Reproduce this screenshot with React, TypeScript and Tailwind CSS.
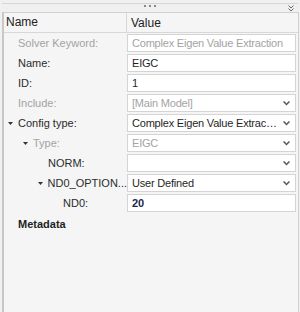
import React from "react";

type Row = {
  label: string;
  value?: string;
  indent: number;
  disabled?: boolean;
  caret?: boolean;
  dropdown?: boolean;
  strong?: boolean;
};

const rows: Row[] = [
  { label: "Solver Keyword:", value: "Complex Eigen Value Extraction", indent: 0, disabled: true },
  { label: "Name:", value: "EIGC", indent: 0 },
  { label: "ID:", value: "1", indent: 0 },
  { label: "Include:", value: "[Main Model]", indent: 0, disabled: true, dropdown: true },
  { label: "Config type:", value: "Complex Eigen Value Extraction", indent: 0, caret: true, dropdown: true },
  { label: "Type:", value: "EIGC", indent: 1, disabled: true, caret: true, dropdown: true },
  { label: "NORM:", value: "", indent: 2, dropdown: true },
  { label: "ND0_OPTION...", value: "User Defined", indent: 2, caret: true, dropdown: true },
  { label: "ND0:", value: "20", indent: 3, strong: true },
];

function Caret() {
  return (
    <svg width="5" height="3" viewBox="0 0 5 3" className="shrink-0">
      <path d="M0 0h5L2.5 3z" fill="#333" />
    </svg>
  );
}

function Chevron() {
  return (
    <svg width="7" height="5" viewBox="0 0 7 5" className="shrink-0">
      <path d="M0.5 0.5L3.5 3.5L6.5 0.5" fill="none" stroke="#555" strokeWidth="1.3" />
      <path d="M1.5 0.5L3.5 2.5L5.5 0.5" fill="none" stroke="#888" strokeWidth="0.8" />
    </svg>
  );
}

function FieldRow({ row }: { row: Row }) {
  const pad = 4 + row.indent * 15;
  return (
    <div className="flex h-[20px] items-center">
      <div className="flex w-[123px] items-center" style={{ paddingLeft: pad }}>
        <div className="flex w-[10px] items-center">{row.caret ? <Caret /> : null}</div>
        <span className={row.disabled ? "text-[#a3a3a3]" : "text-[#2b2b2b]"}>{row.label}</span>
      </div>
      <div className="flex h-[18px] w-[169px] items-center justify-between gap-[5px] border border-[#d4d4d4] bg-white pl-[4px] pr-[5px]">
        <span
          className={
            "min-w-0 truncate tracking-[-0.2px] " +
            (row.disabled ? "text-[#a3a3a3]" : row.strong ? "font-bold text-[#1c2a4a]" : "text-[#1f1f1f]")
          }
        >
          {row.value}
        </span>
        {row.dropdown ? <Chevron /> : null}
      </div>
    </div>
  );
}

export default function App() {
  return (
    <div
      className="h-[312px] w-[300px] overflow-hidden bg-[#f0f0f0] text-[11px]"
      style={{ fontFamily: '"Liberation Sans", Arial, sans-serif' }}
    >
      <div className="relative mx-[2px] mt-[3px] h-[9px] border-t border-[#d6d6d6]">
        <div className="flex justify-center gap-[3px] pt-[1px]">
          <span className="h-[2px] w-[2px] bg-[#888]" />
          <span className="h-[2px] w-[2px] bg-[#888]" />
          <span className="h-[2px] w-[2px] bg-[#888]" />
        </div>
        <svg width="6" height="7" viewBox="0 0 6 7" className="absolute right-[4px] top-[1px]">
          <path d="M0.5 0.5L3 3L5.5 0.5M0.5 3.5L3 6L5.5 3.5" fill="none" stroke="#666" strokeWidth="1" />
        </svg>
      </div>
      <div className="ml-[2px] mr-[1px] h-[300px] border-l-2 border-r border-t border-l-[#c8c8c8] border-r-[#d0d0d0] border-t-[#d0d0d0] bg-[#f5f5f5]">
        <div className="flex h-[20px] items-center border-b border-[#d8d8d8] text-[12px] text-[#222]">
          <div className="h-full w-[123px] border-r border-[#d8d8d8] pl-[2px] leading-[19px]">Name</div>
          <div className="pl-[4px]">Value</div>
        </div>
        <div>
          {rows.map((r) => (
            <FieldRow key={r.label} row={r} />
          ))}
          <div className="flex h-[22px] items-center pl-[14px] font-bold text-[#1f1f1f]">Metadata</div>
        </div>
      </div>
    </div>
  );
}
